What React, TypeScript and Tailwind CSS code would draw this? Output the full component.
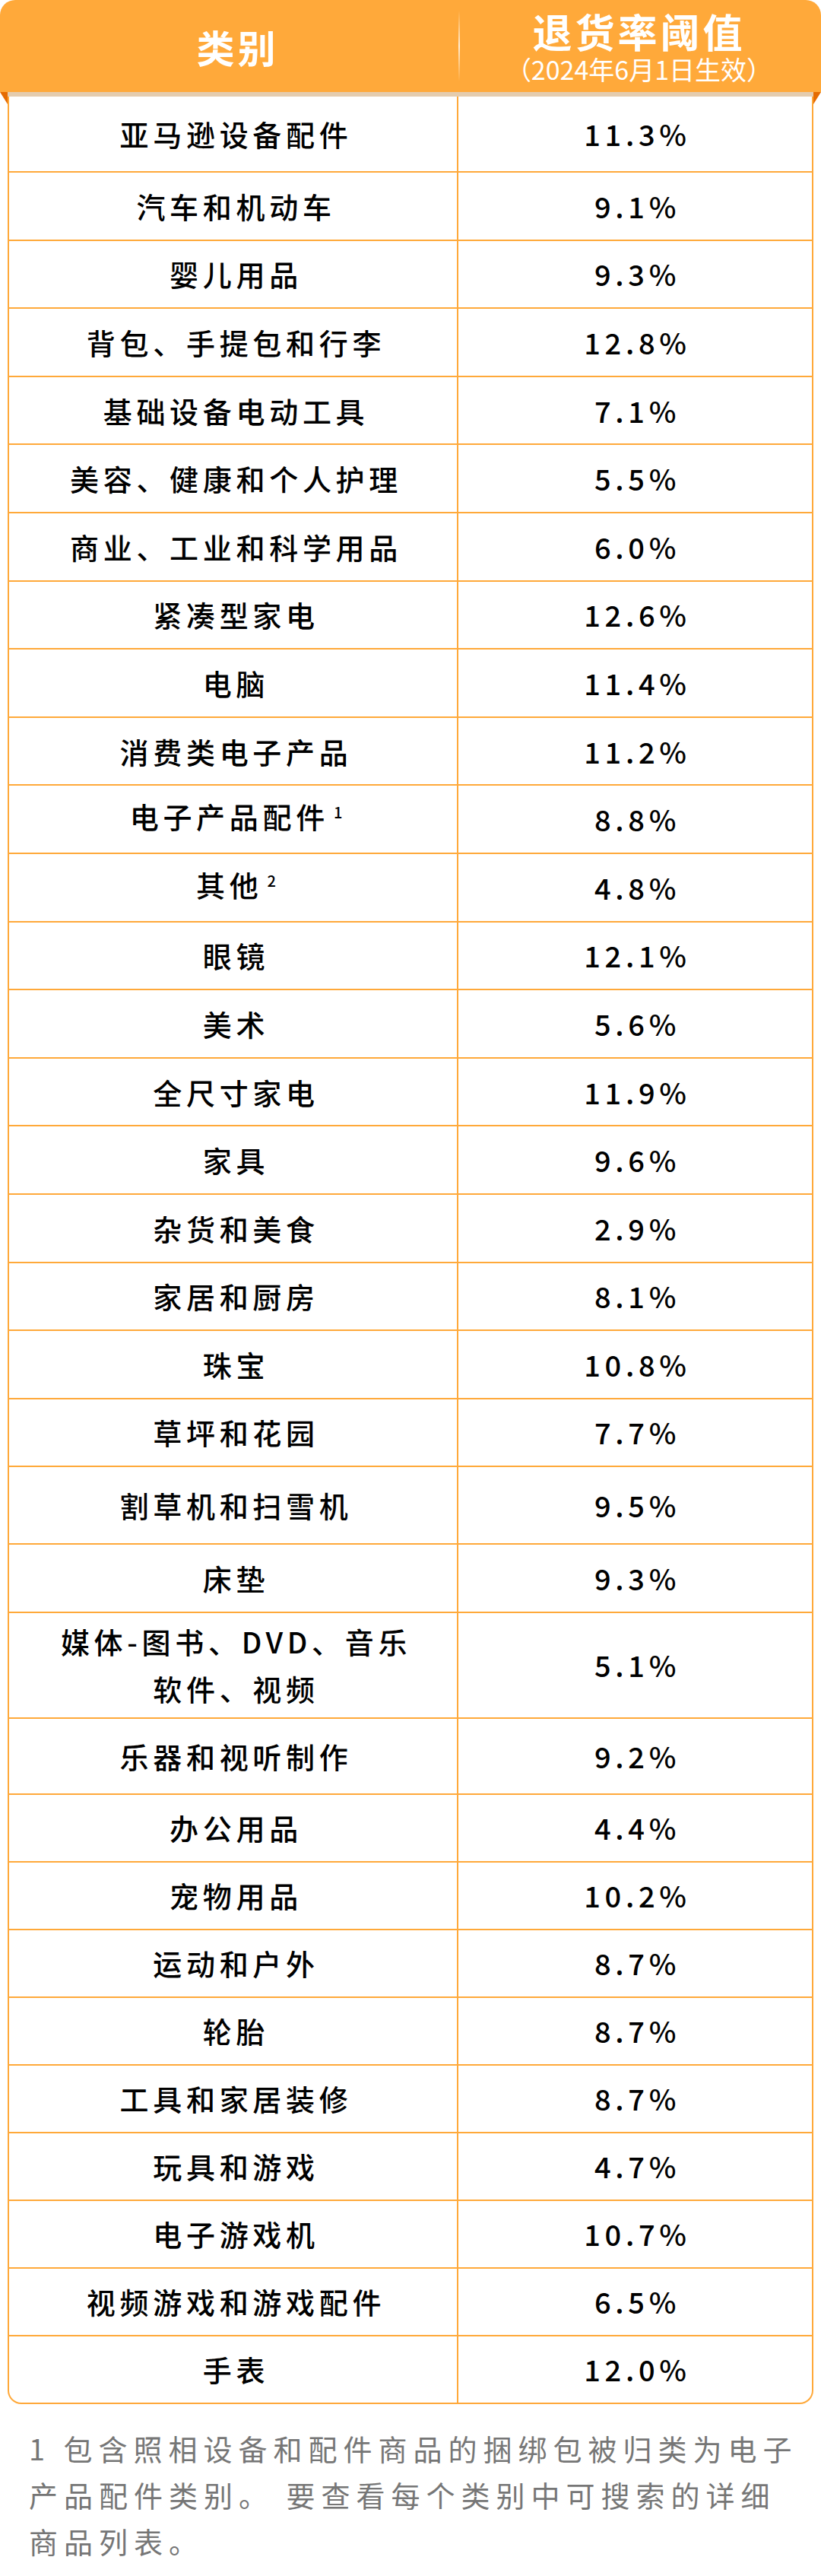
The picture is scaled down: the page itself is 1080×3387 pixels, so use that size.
import React from 'react'

interface Row {
  label: React.ReactNode
  value: string
  h: string
}

function Sup({ n }: { n: string }) {
  return <span className="relative -top-[13px] ml-[6px] text-[20px] tracking-normal">{n}</span>
}

const rows: Row[] = [
  { label: '亚马逊设备配件', value: '11.3%', h: 'h-[100px]' },
  { label: '汽车和机动车', value: '9.1%', h: 'h-[89.6px]' },
  { label: '婴儿用品', value: '9.3%', h: 'h-[89.6px]' },
  { label: '背包、手提包和行李', value: '12.8%', h: 'h-[89.6px]' },
  { label: '基础设备电动工具', value: '7.1%', h: 'h-[89.6px]' },
  { label: '美容、健康和个人护理', value: '5.5%', h: 'h-[89.6px]' },
  { label: '商业、工业和科学用品', value: '6.0%', h: 'h-[89.6px]' },
  { label: '紧凑型家电', value: '12.6%', h: 'h-[89.6px]' },
  { label: '电脑', value: '11.4%', h: 'h-[89.6px]' },
  { label: '消费类电子产品', value: '11.2%', h: 'h-[89.6px]' },
  { label: <>电子产品配件<Sup n="1" /></>, value: '8.8%', h: 'h-[89.6px]' },
  { label: <>其他<Sup n="2" /></>, value: '4.8%', h: 'h-[89.6px]' },
  { label: '眼镜', value: '12.1%', h: 'h-[89.6px]' },
  { label: '美术', value: '5.6%', h: 'h-[89.6px]' },
  { label: '全尺寸家电', value: '11.9%', h: 'h-[89.6px]' },
  { label: '家具', value: '9.6%', h: 'h-[89.6px]' },
  { label: '杂货和美食', value: '2.9%', h: 'h-[89.6px]' },
  { label: '家居和厨房', value: '8.1%', h: 'h-[89.6px]' },
  { label: '珠宝', value: '10.8%', h: 'h-[89.6px]' },
  { label: '草坪和花园', value: '7.7%', h: 'h-[89.6px]' },
  { label: '割草机和扫雪机', value: '9.5%', h: 'h-[102px]' },
  { label: '床垫', value: '9.3%', h: 'h-[89.6px]' },
  {
    label: (
      <>
        媒体-图书、DVD、音乐
        <br />
        软件、视频
      </>
    ),
    value: '5.1%',
    h: 'h-[139px]',
  },
  { label: '乐器和视听制作', value: '9.2%', h: 'h-[100px]' },
  { label: '办公用品', value: '4.4%', h: 'h-[89px]' },
  { label: '宠物用品', value: '10.2%', h: 'h-[89px]' },
  { label: '运动和户外', value: '8.7%', h: 'h-[89px]' },
  { label: '轮胎', value: '8.7%', h: 'h-[89px]' },
  { label: '工具和家居装修', value: '8.7%', h: 'h-[89px]' },
  { label: '玩具和游戏', value: '4.7%', h: 'h-[89px]' },
  { label: '电子游戏机', value: '10.7%', h: 'h-[89px]' },
  { label: '视频游戏和游戏配件', value: '6.5%', h: 'h-[89px]' },
  { label: '手表', value: '12.0%', h: 'h-[87px]' },
]

export default function App() {
  return (
    <div className="h-[3387px] w-[1080px] bg-white font-['Noto_Sans_CJK_SC',sans-serif]">
      {/* header */}
      <div className="flex h-[121px] rounded-t-[20px] bg-[#ffa93a] px-[12px] text-white">
        <div className="flex w-[591px] items-center justify-center pl-[10px]">
          <span className="text-[50px] font-bold leading-[60px] tracking-[4px]">类别</span>
        </div>
        <div className="my-[14px] w-[2px] bg-linear-to-b from-transparent via-white/80 to-transparent" />
        <div className="flex flex-1 flex-col items-center justify-center pl-[8px]">
          <div className="text-[52px] font-bold leading-[60px] tracking-[4px]">退货率阈值</div>
          <div className="text-[34px] leading-[40px]">（2024年6月1日生效）</div>
        </div>
      </div>

      {/* shadow strip with folds */}
      <div className="flex h-[6px]">
        <svg className="h-[16px] w-[10px] shrink-0" viewBox="0 0 10 16">
          <polygon points="0,0 10,0 10,16" fill="#e56b02" />
        </svg>
        <div className="flex-1 bg-[#e4ccae]" />
        <svg className="h-[16px] w-[10px] shrink-0" viewBox="0 0 10 16">
          <polygon points="0,0 10,0 0,16" fill="#e56b02" />
        </svg>
      </div>

      {/* table body */}
      <div className="mx-[10px] rounded-b-[18px] border-x-2 border-b-2 border-[#ffa93a]">
        {rows.map((r, i) => (
          <div
            key={i}
            className={`flex ${r.h} ${i < rows.length - 1 ? 'border-b-2 border-[#ffa93a]' : ''}`}
          >
            <div className="flex w-[591px] items-center justify-center border-r-2 border-[#ffa93a] pl-[8px] text-center">
              <span className="text-[38px] font-medium leading-[62px] tracking-[5.7px] text-black">
                {r.label}
              </span>
            </div>
            <div className="flex flex-1 items-center justify-center pl-[6px]">
              <span className="text-[38px] font-medium leading-[62px] tracking-[5.7px] text-black">
                {r.value}
              </span>
            </div>
          </div>
        ))}
      </div>

      {/* footnote */}
      <div className="pl-[38px] pt-[27px] text-[38px] leading-[61px] tracking-[8px] text-[#767676]">
        <div className="whitespace-nowrap">1 包含照相设备和配件商品的捆绑包被归类为电子</div>
        <div className="whitespace-nowrap">产品配件类别。 要查看每个类别中可搜索的详细</div>
        <div className="whitespace-nowrap">商品列表。</div>
      </div>
    </div>
  )
}
